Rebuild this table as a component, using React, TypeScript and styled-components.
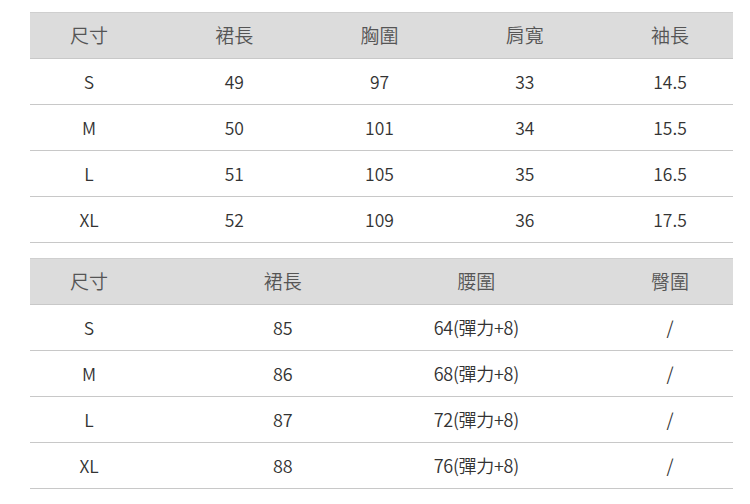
import React from 'react';
import styled, { createGlobalStyle } from 'styled-components';

const GlobalStyle = createGlobalStyle`
  html, body {
    margin: 0;
    padding: 0;
    background: #fff;
  }
  body {
    font-family: 'Noto Sans CJK TC', 'Noto Sans', sans-serif;
  }
`;

const Page = styled.div`
  width: 750px;
  height: 504px;
  padding: 12px 17px 0 30px;
  box-sizing: border-box;
  display: flex;
  flex-direction: column;
  gap: 15px;
`;

const Table = styled.div`
  display: flex;
  flex-direction: column;
  border-top: 1px solid #cfcfcf;
`;

const Row = styled.div<{ $head?: boolean }>`
  height: 45px;
  display: flex;
  justify-content: space-between;
  align-items: center;
  padding-right: 4px;
  background: ${p => (p.$head ? '#dcdcdc' : '#fff')};
  border-bottom: 1px solid #c8c8c8;
`;

const Cell = styled.div<{ $head?: boolean; $narrow?: boolean }>`
  width: 118px;
  text-align: center;
  font-size: ${p => (p.$head ? '19px' : p.$narrow ? '18px' : '17.5px')};
  font-weight: 350;
  color: ${p => (p.$head ? '#555' : '#333')};
  line-height: 1;
  white-space: nowrap;
  margin-top: ${p => (p.$head ? '-2px' : p.$narrow ? '-2px' : '0')};
  letter-spacing: ${p => (p.$narrow ? '-0.3px' : '0')};
`;

const dressHead = ['尺寸', '裙長', '胸圍', '肩寬', '袖長'];
const dressRows = [
  ['S', '49', '97', '33', '14.5'],
  ['M', '50', '101', '34', '15.5'],
  ['L', '51', '105', '35', '16.5'],
  ['XL', '52', '109', '36', '17.5'],
];

const skirtHead = ['尺寸', '裙長', '腰圍', '臀圍'];
const skirtRows = [
  ['S', '85', '64(彈力+8)', '/'],
  ['M', '86', '68(彈力+8)', '/'],
  ['L', '87', '72(彈力+8)', '/'],
  ['XL', '88', '76(彈力+8)', '/'],
];

const SizeTable = ({
  head,
  rows,
  narrow,
}: {
  head: string[];
  rows: string[][];
  narrow?: boolean;
}) => (
  <Table>
    <Row $head>
      {head.map(h => (
        <Cell $head key={h}>
          {h}
        </Cell>
      ))}
    </Row>
    {rows.map(r => (
      <Row key={r[0]}>
        {r.map((c, i) => (
          <Cell key={i} $narrow={narrow && i > 0}>
            {c}
          </Cell>
        ))}
      </Row>
    ))}
  </Table>
);

const App = () => (
  <>
    <GlobalStyle />
    <Page>
      <SizeTable head={dressHead} rows={dressRows} />
      <SizeTable head={skirtHead} rows={skirtRows} narrow />
    </Page>
  </>
);

export default App;
